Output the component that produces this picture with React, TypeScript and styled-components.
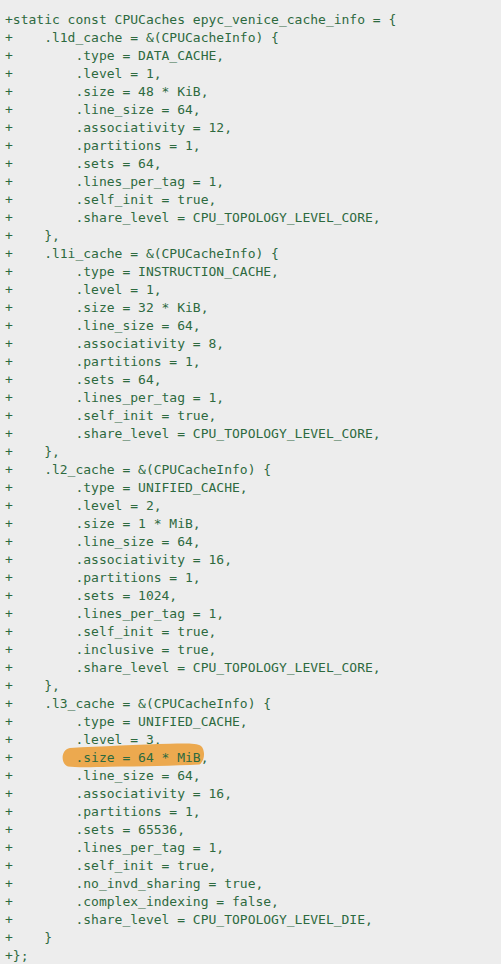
import React from "react";
import styled, { createGlobalStyle } from "styled-components";

const GlobalStyle = createGlobalStyle`
  html, body {
    margin: 0;
    padding: 0;
    background: #ededed;
  }
`;

const Page = styled.div`
  background: #ededed;
  min-height: 964px;
  padding: 11px 0 0 5px;
  box-sizing: border-box;
`;

const Code = styled.pre`
  margin: 0;
  font-family: "DejaVu Sans Mono", "Liberation Mono", monospace;
  font-size: 13px;
  line-height: 18px;
  color: #2d6a3f;
  white-space: pre;
`;

const Line = styled.div`
  height: 18px;
`;

const Mark = styled.span`
  position: relative;
  display: inline-block;
  height: 18px;
  vertical-align: top;
`;

const MarkText = styled.span`
  position: relative;
  z-index: 1;
`;

const Brush = styled.svg`
  position: absolute;
  left: -15px;
  top: -6px;
  width: 145px;
  height: 25px;
  z-index: 0;
`;

const lines: string[] = [
  "+static const CPUCaches epyc_venice_cache_info = {",
  "+    .l1d_cache = &(CPUCacheInfo) {",
  "+        .type = DATA_CACHE,",
  "+        .level = 1,",
  "+        .size = 48 * KiB,",
  "+        .line_size = 64,",
  "+        .associativity = 12,",
  "+        .partitions = 1,",
  "+        .sets = 64,",
  "+        .lines_per_tag = 1,",
  "+        .self_init = true,",
  "+        .share_level = CPU_TOPOLOGY_LEVEL_CORE,",
  "+    },",
  "+    .l1i_cache = &(CPUCacheInfo) {",
  "+        .type = INSTRUCTION_CACHE,",
  "+        .level = 1,",
  "+        .size = 32 * KiB,",
  "+        .line_size = 64,",
  "+        .associativity = 8,",
  "+        .partitions = 1,",
  "+        .sets = 64,",
  "+        .lines_per_tag = 1,",
  "+        .self_init = true,",
  "+        .share_level = CPU_TOPOLOGY_LEVEL_CORE,",
  "+    },",
  "+    .l2_cache = &(CPUCacheInfo) {",
  "+        .type = UNIFIED_CACHE,",
  "+        .level = 2,",
  "+        .size = 1 * MiB,",
  "+        .line_size = 64,",
  "+        .associativity = 16,",
  "+        .partitions = 1,",
  "+        .sets = 1024,",
  "+        .lines_per_tag = 1,",
  "+        .self_init = true,",
  "+        .inclusive = true,",
  "+        .share_level = CPU_TOPOLOGY_LEVEL_CORE,",
  "+    },",
  "+    .l3_cache = &(CPUCacheInfo) {",
  "+        .type = UNIFIED_CACHE,",
  "+        .level = 3,",
  "@@MARK@@",
  "+        .line_size = 64,",
  "+        .associativity = 16,",
  "+        .partitions = 1,",
  "+        .sets = 65536,",
  "+        .lines_per_tag = 1,",
  "+        .self_init = true,",
  "+        .no_invd_sharing = true,",
  "+        .complex_indexing = false,",
  "+        .share_level = CPU_TOPOLOGY_LEVEL_DIE,",
  "+    }",
  "+};",
];

export default function App() {
  return (
    <>
      <GlobalStyle />
      <Page>
        <Code>
          {lines.map((l, i) =>
            l === "@@MARK@@" ? (
              <Line key={i}>
                {"+        "}
                <Mark>
                  <Brush viewBox="0 0 145 25" preserveAspectRatio="none">
                    <path
                      d="M10,5 C40,3.5 80,1.5 110,0.8 C126,0.3 137,0.3 141,3 C145.5,7 145,18 139.5,21.5 C115,22.8 80,23.3 50,23.8 C30,24.3 15,24.5 8,23.5 C1,21.5 0,7 10,5 Z"
                      fill="#eca94f"
                    />
                  </Brush>
                  <MarkText>.size = 64 * MiB</MarkText>
                </Mark>
                {","}
              </Line>
            ) : (
              <Line key={i}>{l}</Line>
            )
          )}
        </Code>
      </Page>
    </>
  );
}
